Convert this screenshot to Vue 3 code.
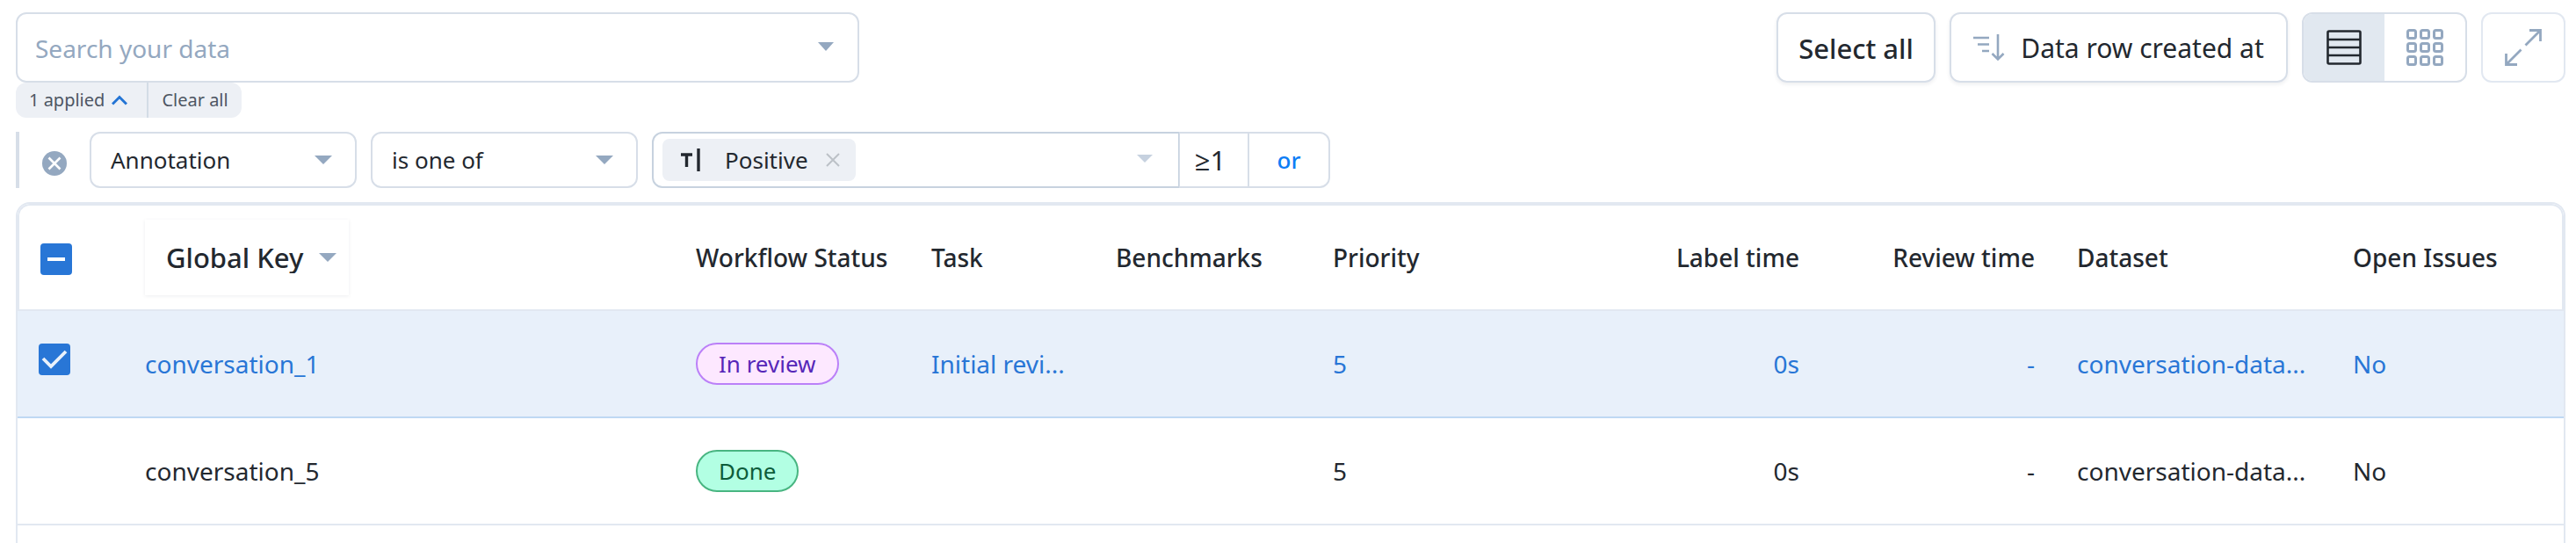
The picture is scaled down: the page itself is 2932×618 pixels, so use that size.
<script setup>
import { ref } from 'vue'

const query = ref('')
const field = ref('Annotation')
const operator = ref('is one of')
const keyColumn = ref('Global Key')
const view = ref('list')

const columns = [
  { label: 'Workflow Status' },
  { label: 'Task' },
  { label: 'Benchmarks' },
  { label: 'Priority' },
  { label: 'Label time', end: true },
  { label: 'Review time', end: true },
  { label: 'Dataset' },
  { label: 'Open Issues' },
]

const rows = ref([
  { key: 'conversation_1', selected: true, status: 'In review', tone: 'review', task: 'Initial revi...', priority: 5, labelTime: '0s', reviewTime: '-', dataset: 'conversation-data...', issues: 'No' },
  { key: 'conversation_5', selected: false, status: 'Done', tone: 'done', task: '', priority: 5, labelTime: '0s', reviewTime: '-', dataset: 'conversation-data...', issues: 'No' },
])

const tiles = [0, 15, 30].flatMap((y) => [0, 15, 30].map((x) => ({ x, y })))
</script>

<template>
  <main class="page">
    <header class="toolbar">
      <div class="search">
        <input v-model="query" type="text" aria-label="Search your data" placeholder="Search your data" />
        <button class="search-toggle" type="button" aria-label="Show filters">
          <svg width="18" height="10" viewBox="0 0 18 10"><path d="M0 0H18L9 10Z" fill="#94a8c0" /></svg>
        </button>
      </div>
      <div class="actions">
        <button class="btn select-all" type="button">Select all</button>
        <button class="btn sort" type="button">
          <svg width="36" height="32" viewBox="0 0 36 32" fill="none" stroke="#94a8c0">
            <path d="M0 4H18M5 11.500H18M10 19H18" stroke-width="2.600" />
            <path d="M28 0V28M21.500 22L28 28.500L34.500 22" stroke-width="2.600" />
          </svg>
          <span>Data row created at</span>
        </button>
        <div class="views" role="group" aria-label="View">
          <button type="button" aria-label="List view" :class="{ active: view === 'list' }" @click="view = 'list'">
            <svg width="40" height="40" viewBox="0 0 40 40" fill="none" stroke="#23282f" stroke-width="2.600">
              <rect x="1.500" y="1.500" width="37" height="37" rx="1.500" />
              <path d="M1 11H39M1 20H39M1 29H39" />
            </svg>
          </button>
          <button type="button" aria-label="Grid view" :class="{ active: view === 'grid' }" @click="view = 'grid'">
            <svg width="42" height="42" viewBox="0 0 42 42" fill="none" stroke="#94a8c0" stroke-width="3">
              <rect v-for="t in tiles" :key="`${t.x}-${t.y}`" :x="t.x + 1.5" :y="t.y + 1.5" width="9" height="9" rx="2" />
            </svg>
          </button>
        </div>
        <button class="expand" type="button" aria-label="Expand">
          <svg width="42" height="42" viewBox="0 0 42 42" fill="none" stroke="#94a8c0" stroke-width="2.800">
            <path d="M28 1.500H40.500V14M40 2L23.500 18.500M1.500 28V40.500H14M2 40L18.500 23.500" />
          </svg>
        </button>
      </div>
    </header>

    <div class="applied">
      <button type="button">
        1 applied
        <svg width="18" height="12" viewBox="0 0 18 12" fill="none" stroke="#2374d4" stroke-width="3"><path d="M1 10.500L9 2.500L17 10.500" /></svg>
      </button>
      <button type="button">Clear all</button>
    </div>

    <section class="filter" aria-label="Filter">
      <button class="remove" type="button" aria-label="Remove filter">
        <svg width="28" height="28" viewBox="0 0 28 28">
          <circle cx="14" cy="14" r="14" fill="#94a8c0" />
          <path d="M7.500 7.500L20.500 20.500M20.500 7.500L7.500 20.500" stroke="#fff" stroke-width="2.600" />
        </svg>
      </button>
      <div class="pick">
        <select v-model="field" aria-label="Field"><option>Annotation</option></select>
        <svg width="20" height="10" viewBox="0 0 20 10"><path d="M0 0H20L10 10Z" fill="#94a8c0" /></svg>
      </div>
      <div class="pick">
        <select v-model="operator" aria-label="Operator"><option>is one of</option></select>
        <svg width="20" height="10" viewBox="0 0 20 10"><path d="M0 0H20L10 10Z" fill="#94a8c0" /></svg>
      </div>
      <div class="values">
        <div class="value-box">
          <span class="chip">
            <svg width="22" height="26" viewBox="0 0 22 26" fill="none" stroke="#23282f">
              <path d="M0 7H13M6.500 7V21" stroke-width="3.400" />
              <path d="M20 0V26" stroke-width="3.400" />
            </svg>
            <span>Positive</span>
            <button type="button" aria-label="Remove Positive">
              <svg width="16" height="16" viewBox="0 0 16 16"><path d="M1 1L15 15M15 1L1 15" stroke="#bcc1c7" stroke-width="2" /></svg>
            </button>
          </span>
          <button class="value-toggle" type="button" aria-label="Choose values">
            <svg width="18" height="9" viewBox="0 0 18 9"><path d="M0 0H18L9 9Z" fill="#c6d1df" /></svg>
          </button>
        </div>
        <button class="count" type="button">≥1</button>
        <button class="or" type="button">or</button>
      </div>
    </section>

    <section class="panel">
      <table>
        <colgroup>
          <col class="c-check" /><col class="c-key" /><col class="c-status" /><col class="c-task" />
          <col class="c-bench" /><col class="c-priority" /><col class="c-label" /><col class="c-review" />
          <col class="c-dataset" /><col class="c-issues" />
        </colgroup>
        <thead>
          <tr>
            <th class="check-cell">
              <span class="check">
                <input type="checkbox" aria-label="Select all rows" checked />
                <svg width="36" height="36" viewBox="0 0 36 36"><path d="M8 18H28" stroke="#fff" stroke-width="4" /></svg>
              </span>
            </th>
            <th>
              <div class="key-pick">
                <select v-model="keyColumn" aria-label="Key column"><option>Global Key</option></select>
                <svg width="20" height="10" viewBox="0 0 20 10"><path d="M0 0H20L10 10Z" fill="#94a8c0" /></svg>
              </div>
            </th>
            <th v-for="c in columns" :key="c.label" :class="{ end: c.end }">{{ c.label }}</th>
          </tr>
        </thead>
        <tbody>
          <tr v-for="r in rows" :key="r.key" :class="{ selected: r.selected }">
            <td class="check-cell">
              <span v-if="r.selected" class="check">
                <input v-model="r.selected" type="checkbox" :aria-label="`Select ${r.key}`" />
                <svg width="36" height="36" viewBox="0 0 36 36" fill="none"><path d="M5 17L14 26L31 9" stroke="#e9f1fb" stroke-width="3.800" /></svg>
              </span>
            </td>
            <td>{{ r.key }}</td>
            <td><span class="badge" :class="r.tone">{{ r.status }}</span></td>
            <td>{{ r.task }}</td>
            <td></td>
            <td>{{ r.priority }}</td>
            <td class="end">{{ r.labelTime }}</td>
            <td class="end">{{ r.reviewTime }}</td>
            <td>{{ r.dataset }}</td>
            <td>{{ r.issues }}</td>
          </tr>
        </tbody>
      </table>
    </section>
  </main>
</template>

<style>
html,
body {
  margin: 0;
  background: #fff;
}
</style>

<style scoped>
.page {
  --line: #d7dee8;
  --line-soft: #e2e8f1;
  --muted: #94a8c0;
  --ink: #23282f;
  --blue: #2876d6;
  box-sizing: border-box;
  display: flex;
  flex-direction: column;
  min-height: 100vh;
  padding: 14px 12px 0 18px;
  color: var(--ink);
  font-family: "Noto Sans", "Open Sans", sans-serif;
  font-size: 26px;
  line-height: 36px;
}
.page *,
.page *::before {
  box-sizing: border-box;
}
button,
input,
select {
  margin: 0;
  padding: 0;
  border: 0;
  background: none;
  color: inherit;
  font: inherit;
  appearance: none;
}
button {
  display: inline-flex;
  align-items: center;
  justify-content: center;
}
svg {
  flex: none;
  display: block;
}
.toolbar {
  display: flex;
  justify-content: space-between;
}
.search {
  display: flex;
  width: 960px;
  height: 80px;
  border: 2px solid var(--line);
  border-radius: 12px;
}
.search input {
  flex: 1;
  min-width: 0;
  padding: 2px 0 0 20px;
  font-size: 28px;
}
.search input::placeholder {
  color: var(--muted);
  opacity: 1;
}
.search-toggle {
  width: 72px;
  padding-bottom: 2px;
}
.actions {
  display: flex;
  gap: 16px;
  font-size: 30px;
}
.btn {
  height: 80px;
  padding: 2px 20px 0;
  border: 2px solid var(--line);
  border-radius: 12px;
  box-shadow: 0 2px 4px rgba(30, 40, 60, 0.08);
}
.select-all {
  width: 181px;
  font-size: 31px;
  font-weight: 500;
}
.sort {
  gap: 18px;
  width: 385px;
}
.views {
  display: flex;
  width: 188px;
  height: 80px;
  overflow: hidden;
  border: 2px solid var(--line);
  border-radius: 12px;
}
.views button {
  flex: 1;
}
.views .active {
  background: #e1e8f0;
}
.expand {
  width: 96px;
  height: 80px;
  border: 2px solid var(--line-soft);
  border-radius: 12px;
}
.applied {
  display: flex;
  align-self: flex-start;
  height: 40px;
  border-radius: 12px;
  background: #edf0f5;
  color: #4d5663;
  font-size: 20px;
}
.applied button {
  gap: 8px;
  padding: 0 15px;
}
.applied button:first-child {
  padding-right: 22px;
  border-right: 2px solid #d3dce6;
}
.filter {
  display: flex;
  align-items: stretch;
  height: 64px;
  margin-top: 16px;
  border-left: 4px solid var(--line);
}
.remove {
  width: 80px;
  padding-top: 8px;
}
.pick {
  display: grid;
  width: 304px;
  margin-right: 16px;
}
.pick > *,
.key-pick > *,
.check > * {
  grid-area: 1 / 1;
}
.pick select {
  padding-left: 22px;
  border: 2px solid var(--line);
  border-radius: 12px;
}
.pick svg {
  align-self: center;
  justify-self: end;
  margin-right: 28px;
  pointer-events: none;
}
.values {
  display: flex;
}
.value-box {
  display: flex;
  align-items: center;
  justify-content: space-between;
  width: 600px;
  padding-left: 10px;
  border: 2px solid #c7d2df;
  border-right-width: 1px;
  border-radius: 12px 0 0 12px;
}
.chip {
  display: flex;
  align-items: center;
  height: 48px;
  padding: 0 18px 0 21px;
  border-radius: 8px;
  background: #edf0f5;
}
.chip > span {
  margin: 0 20px 0 28px;
}
.value-toggle {
  width: 76px;
  height: 100%;
  padding-bottom: 4px;
}
.count {
  width: 79px;
  padding: 0 8px 0 0;
  border: solid var(--line);
  border-width: 2px 1px 2px 1px;
  font-size: 31px;
}
.or {
  width: 93px;
  border: 2px solid var(--line);
  border-left-width: 1px;
  border-radius: 0 12px 12px 0;
  color: #0d7df5;
  font-weight: 500;
}
.panel {
  flex: 1;
  margin-top: 16px;
  overflow: hidden;
  border: 2px solid var(--line-soft);
  border-bottom: 0;
  border-radius: 16px 16px 0 0;
}
table {
  width: 100%;
  table-layout: fixed;
  border-collapse: separate;
  border-spacing: 0;
  font-size: 28px;
}
.c-check { width: 121px; }
.c-key { width: 627px; }
.c-status { width: 268px; }
.c-task { width: 210px; }
.c-bench { width: 247px; }
.c-priority { width: 269px; }
.c-label { width: 310px; }
.c-review { width: 268px; }
.c-dataset { width: 314px; }
.c-issues { width: 264px; }
th,
td {
  height: 122px;
  padding: 0 24px;
  border-bottom: 2px solid var(--line-soft);
  text-align: left;
  white-space: nowrap;
  font-weight: 400;
}
th {
  border-top: 2px solid var(--line-soft);
  font-weight: 500;
}
th:first-child {
  border-left: 2px solid var(--line-soft);
  border-top-left-radius: 14px;
}
th:last-child {
  border-right: 2px solid var(--line-soft);
  border-top-right-radius: 14px;
}
.end {
  text-align: right;
}
.selected td {
  border-bottom-color: #bfd8f3;
  background: #e8f0fa;
  color: var(--blue);
}
.check {
  display: inline-grid;
  vertical-align: middle;
}
td .check {
  margin-bottom: 10px;
}
.check input {
  width: 36px;
  height: 36px;
  border-radius: 4px;
  background: var(--blue);
}
.check svg {
  pointer-events: none;
}
.key-pick {
  display: inline-grid;
  vertical-align: middle;
  width: 232px;
  height: 86px;
  box-shadow: 0 1px 4px rgba(30, 40, 60, 0.08);
  font-size: 31px;
}
.key-pick select {
  padding-left: 24px;
  font-weight: 500;
}
.key-pick svg {
  align-self: center;
  justify-self: end;
  margin-right: 14px;
  pointer-events: none;
}
.badge {
  display: inline-flex;
  align-items: center;
  height: 48px;
  padding: 0 24px;
  border: 2px solid;
  border-radius: 24px;
  vertical-align: middle;
  font-size: 26px;
}
.selected .review,
.review {
  border-color: #bb80f8;
  background: #fde8ff;
  color: #5627b8;
}
.done {
  border-color: #48b581;
  background: #b2ffe3;
  color: #0d5c3a;
}
</style>
